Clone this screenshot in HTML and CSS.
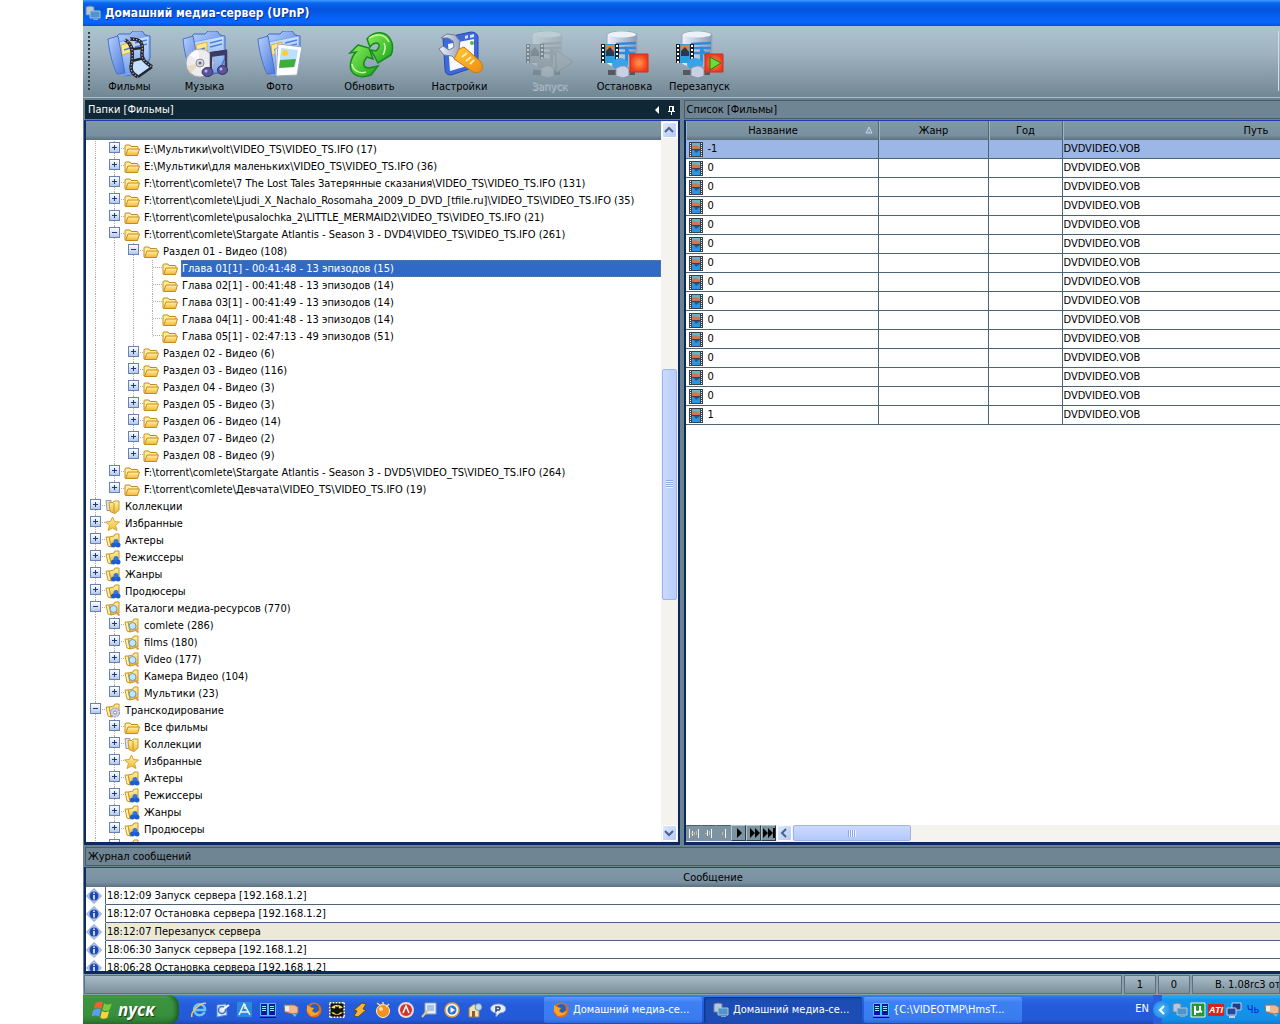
FILE: index.html
```html
<!DOCTYPE html>
<html lang="ru">
<head>
<meta charset="utf-8">
<title>Домашний медиа-сервер (UPnP)</title>
<link rel="stylesheet" href="styles.css">
</head>
<body>
<svg class="sprite" aria-hidden="true">
  <defs>
    <linearGradient id="gBlue" x1="0" y1="0" x2="1" y2="1"><stop offset="0" stop-color="#b5d0fb"/><stop offset="1" stop-color="#4a78dc"/></linearGradient>
    <linearGradient id="gPale" x1="0" y1="0" x2="0" y2="1"><stop offset="0" stop-color="#cfe4ff"/><stop offset="1" stop-color="#6f9cea"/></linearGradient>
    <linearGradient id="gGreen" x1="0" y1="0" x2="1" y2="1"><stop offset="0" stop-color="#8cf05a"/><stop offset="1" stop-color="#18a01c"/></linearGradient>
    <linearGradient id="gGold" x1="0" y1="0" x2="0" y2="1"><stop offset="0" stop-color="#fff3a8"/><stop offset="1" stop-color="#f2b632"/></linearGradient>
    <linearGradient id="gOrange" x1="0" y1="0" x2="1" y2="1"><stop offset="0" stop-color="#ffcc3c"/><stop offset="1" stop-color="#f08a10"/></linearGradient>
    <linearGradient id="gSteel" x1="0" y1="0" x2="1" y2="0"><stop offset="0" stop-color="#eef2fa"/><stop offset="1" stop-color="#8b99b8"/></linearGradient>
    <radialGradient id="gRed"><stop offset="0" stop-color="#ff9a4a"/><stop offset="1" stop-color="#f0381c"/></radialGradient>

    <symbol id="bigfolder" viewBox="0 0 48 48">
      <path d="M10 6l3-3h11l3-3h9l3 4 5 1v22l-6 15-20 3z" fill="url(#gBlue)" stroke="#3f68c4"/>
      <path d="M12 11l31-6v22l-6 13-21 5z" fill="url(#gPale)" stroke="#7ea4ea"/>
      <path d="M15 14l11-3v10l-10 3z" fill="#ffe88a" stroke="#e0b040"/>
      <path d="M29 12l12-3M29 16l12-3M18 19l6-2" stroke="#4f80dc" stroke-width="1.5"/>
      <path d="M2 8l10-3 7 37-8 1C6 32 3 20 2 8z" fill="url(#gBlue)" stroke="#4a72cc"/>
    </symbol>
    <symbol id="films" viewBox="0 0 48 48">
      <use href="#bigfolder"/>
      <path d="M27 30l11-3 8 9-12 9-7-5z" fill="#c4e2ff"/>
      <path d="M19 9c9 4 8 16 6 27 0 5 3 8 7 10M24 8c9 0 14 2 12 14-1 6 3 9 10 14" fill="none" stroke="#26262e" stroke-width="3.5"/>
      <path d="M27 18l9-1M26 30l12-3M32 46l14-10" fill="none" stroke="#26262e" stroke-width="2.5"/>
      <path d="M19 9c9 4 8 16 6 27 0 5 3 8 7 10M24 8c9 0 14 2 12 14-1 6 3 9 10 14" fill="none" stroke="#cfdcf0" stroke-width="1.2" stroke-dasharray="1 2"/>
    </symbol>
    <symbol id="music" viewBox="0 0 48 48">
      <use href="#bigfolder"/>
      <circle cx="19" cy="32" r="14" fill="#ececee" stroke="#a6a6b2"/>
      <path d="M19 32L9 24a13 13 0 0 1 8-5zM19 32l9 9a13 13 0 0 1-7 4z" fill="#fff"/>
      <path d="M19 32L6 35a13 13 0 0 0 4 7z" fill="#e8dcc0"/>
      <circle cx="19" cy="32" r="4" fill="#d8d8e0" stroke="#8a8a98"/><circle cx="19" cy="32" r="1.500" fill="#667"/>
      <path d="M30 39V22l15-2v18" fill="none" stroke="#3c3a66" stroke-width="2.500"/>
      <path d="M30 21l15-2v5l-15 2z" fill="#3c3a66"/>
      <ellipse cx="26.500" cy="41" rx="5.500" ry="4.500" fill="#5a549c" stroke="#34305e"/><ellipse cx="41.500" cy="39" rx="5" ry="4.500" fill="#5a549c" stroke="#34305e"/>
      <circle cx="25" cy="40" r="1.500" fill="#b8b4ec"/><circle cx="40" cy="38" r="1.500" fill="#b8b4ec"/>
    </symbol>
    <symbol id="photo" viewBox="0 0 48 48">
      <use href="#bigfolder"/>
      <path d="M19 18l5-3v28l-4-1z" fill="#eef4ff" stroke="#8aa0cc"/>
      <path d="M22 13l24 3-5 28-21 1z" fill="#fff" stroke="#9aa8c4"/>
      <path d="M25 17l17 2-3 17-16 1z" fill="#b9e0ff"/>
      <path d="M24 29l16-1-2 8-15 1z" fill="#3fae38"/><circle cx="29" cy="22" r="3" fill="#ffd02c"/>
    </symbol>
    <symbol id="refresh" viewBox="0 0 48 48">
      <path d="M12 14l11 3 4 11-6-2c-5 6-4 11 2 11l9-2-7 9c-14 5-23-2-20-14 1-4 3-7 5-9l-6 1z" fill="url(#gGreen)" stroke="#178a1c" stroke-width="1.500"/>
      <path d="M21 8C28-1 42-1 46 12c1 5 1 8-1 12l-13 8-7-13 5 1c4-4 4-7 1-8-3 0-5 1-7 4z" fill="url(#gGreen)" stroke="#178a1c" stroke-width="1.500"/>
      <path d="M23 7c7-5 16-4 20 4M6 33c1 7 8 10 14 8M38 12c2 4 1 8-1 12" fill="none" stroke="#c4ffa0" stroke-width="1.500"/>
    </symbol>
    <symbol id="settings" viewBox="0 0 48 48">
      <path d="M7 7l28-6q6 0 7 5v29L15 44q-6 0-6-6z" fill="#3e68dc" stroke="#2848b4"/>
      <path d="M12 13l26-5v25l-24 7z" fill="#f7f9ff"/>
      <path d="M29 5l3-1v3l-3 1zM34 4l4-1v3l-4 1z" fill="#d5e4ff"/><circle cx="36" cy="12" r="2" fill="#58b848"/>
      <path d="M5 7l6-4 8 1 5 6-1 8 5 7-6 6-6-6-8-1-5-6 4-3 6 4 5-3-1-6-5-3z" fill="url(#gSteel)" stroke="#737e94"/>
      <path d="M23 18l5-2 17 15c4 8-1 12-8 10L18 28z" fill="url(#gOrange)" stroke="#c87814"/>
      <path d="M26 26l5-4M30 30l5-4M34 33l4-4" stroke="#fff0a8" stroke-width="2"/>
    </symbol>
    <symbol id="server" viewBox="0 0 48 48">
      <path d="M6 3c8-4 22-4 30 0v30c-8 5-22 5-30 0z" fill="url(#gSteel)" stroke="#99a6bc"/>
      <ellipse cx="21" cy="3.500" rx="14" ry="3" fill="#edf2fa"/>
      <path d="M15 13l20-1M15 17h20M17 22h17" stroke="#2f8bd8" stroke-width="2.500"/>
      <path d="M0 13h18v19H0z" fill="#2aa0dc"/><path d="M5 14h8v6H5z" fill="#f07a40"/><path d="M5 20l4-4 4 5v4H5z" fill="#2a3850"/>
      <path d="M2 13v19M16 13v19" stroke="#1c1e24" stroke-width="4"/><path d="M2 14v18M16 14v18" stroke="#fff" stroke-width="2" stroke-dasharray="2 2"/>
      <path d="M24 34V15c3 2 5 5 8 12l-3-1-2-5v12z" fill="#2a8edc"/><ellipse cx="19" cy="33" rx="8" ry="6" fill="#3aa2ec"/>
      <path d="M7 39h27v5H7z" fill="#55585e"/><path d="M15 37l5-2h4l4 3v7l-6 2-7-2z" fill="#c8d0e4" stroke="#8792ac"/>
    </symbol>
    <symbol id="start" viewBox="0 0 48 48"><use href="#server"/><path d="M30 19l17 12-17 11z" fill="#9dabb5" stroke="#667781"/></symbol>
    <symbol id="stop" viewBox="0 0 48 48"><use href="#server"/><path d="M29 23h18v18H29z" fill="url(#gRed)" stroke="#d03018"/></symbol>
    <symbol id="restart" viewBox="0 0 48 48"><use href="#server"/><path d="M29 23h18v18H29z" fill="url(#gRed)" stroke="#d03018"/><path d="M34 26l11 6-11 7z" fill="#6cdc30" stroke="#21791a"/></symbol>

    <symbol id="folder" viewBox="0 0 16 16">
      <path d="M1 13V4q0-1 1-1h4l1 1.500h6q1 0 1 1V7" fill="#fff0a0" stroke="#c8881c"/>
      <path d="M4 7h11.500l-2 6.500H1.500z" fill="url(#gGold)" stroke="#c8881c"/>
    </symbol>
    <symbol id="books" viewBox="0 0 16 16">
      <path d="M1 1.500h5v10H2z" fill="#e4e4e4" stroke="#999"/><path d="M4 3.500h4l1-1.500h5v9l-4 3.500-5-2z" fill="url(#gGold)" stroke="#c29a30"/><path d="M9 4v9" stroke="#c29a30"/>
    </symbol>
    <symbol id="star" viewBox="0 0 16 16"><path d="M7.500 1l2 4.500 5 .5-4 3.500 1.500 5-4.500-2.500L3 14.500l1.500-5L.5 6l5-.5z" fill="url(#gGold)" stroke="#d6a428"/></symbol>
    <symbol id="yfold" viewBox="0 0 16 16"><path d="M4 4l5-1 1-2h4v11l-8 2z" fill="url(#gGold)" stroke="#c8981c"/><path d="M1 4h3l2 10-3-1z" fill="#fff2b4" stroke="#c8981c"/></symbol>
    <symbol id="people" viewBox="0 0 16 16"><use href="#yfold"/><circle cx="11" cy="8.500" r="2.500" fill="#2f78e4"/><circle cx="8.500" cy="12" r="2.500" fill="#1c5cd0"/><circle cx="13" cy="12" r="2.500" fill="#1c5cd0"/></symbol>
    <symbol id="search" viewBox="0 0 16 16"><use href="#yfold"/><path d="M11 11l3.500 3.500" stroke="#e0965c" stroke-width="2"/><circle cx="8.500" cy="8" r="3.500" fill="#bfe6ff" stroke="#6f98b8"/></symbol>
    <symbol id="gear" viewBox="0 0 16 16"><use href="#yfold"/><circle cx="10" cy="9.500" r="4.500" fill="#cfd0e6" stroke="#8a8cb0" stroke-dasharray="2 1"/><circle cx="10" cy="9.500" r="1.500" fill="#fff" stroke="#8a8cb0"/></symbol>
    <symbol id="clip" viewBox="0 0 14 15">
      <path d="M0 0h14v15H0z" fill="#38404a"/><path d="M3 1h8v6H3z" fill="#68b4c4"/><path d="M3 4l3-1 5 2v2H3z" fill="#d8744c"/><path d="M3 8h8v6H3z" fill="#2e94e4"/><path d="M5 8h6l-4 3z" fill="#28587c"/>
      <path d="M1.500 1v14M12.500 1v14" stroke="#fff" stroke-dasharray="1 1"/>
    </symbol>
    <symbol id="info" viewBox="0 0 16 16"><path d="M8 .5L15.500 8 8 15.500.5 8z" fill="#b4c6ee" stroke="#8ca0d0"/><circle cx="8" cy="8" r="4.500" fill="#1c48b0"/><path d="M8 4.500v1.500M8 7v4.500" stroke="#fff" stroke-width="1.5"/></symbol>
    <symbol id="app" viewBox="0 0 16 16"><path d="M1 2q4-2 8 0v8H1z" fill="#b6c8da" stroke="#6c849c"/><path d="M5 6h10v7H5z" fill="#4f94cc" stroke="#a8c4d8"/><path d="M8 14.500h5" stroke="#8ca4b8"/></symbol>
    <symbol id="flag" viewBox="0 0 20 20"><path d="M3 4q4-3 7-1L8.500 9q-3-2-7 0z" fill="#f0602c"/><path d="M11 4q3 2 7 0l-2 6q-4 2-6.500 0z" fill="#7cc83c"/><path d="M1 10.500q4-3 7-1L6.500 16q-3-2-7 0z" fill="#5c9cf4"/><path d="M9 11q3 2 6.500 0L14 17q-4 2-6.500 0z" fill="#fcd03c"/></symbol>
    <symbol id="ie" viewBox="0 0 16 16"><path d="M13.500 10a5.500 5.500 0 1 1 .5-2H4.500" fill="none" stroke="#6cc4fc" stroke-width="2.500"/><path d="M1 15C-1 10 10 0 15 1.500" fill="none" stroke="#f4cc48" stroke-width="1.500"/></symbol>
    <symbol id="outlook" viewBox="0 0 16 16"><path d="M3 3l9-1 1 11-10 2z" fill="#dceafc" stroke="#5c8cc8"/><circle cx="8" cy="8" r="3.500" fill="none" stroke="#3c78c4" stroke-width="1.500"/><path d="M8 8l7-5" stroke="#fff" stroke-width="2"/></symbol>
    <symbol id="compass" viewBox="0 0 16 16"><path d="M0 0h15v15H0z" fill="#2c88d8"/><path d="M2 13L7 2l6 11M4 10h8M8 2v5" fill="none" stroke="#e8f6ff" stroke-width="1.500"/></symbol>
    <symbol id="far" viewBox="0 0 16 16"><path d="M.5 1.500h15v12H.500z" fill="#0c149c" stroke="#24d4f4"/><path d="M8 1v13" stroke="#24d4f4" stroke-width="2"/><path d="M2 4.500h4M2 6.500h4M2 8.500h4M10 4.500h4M10 6.500h4M10 8.500h4" stroke="#9ce8fc"/><path d="M0 15.500h16" stroke="#061040"/></symbol>
    <symbol id="plug" viewBox="0 0 16 16"><path d="M1 3h10l4 2v6l-5 1-8-2z" fill="#f0b890" stroke="#a87050"/><path d="M2 4h4v5H2z" fill="#e8ecf4"/><path d="M9 12h5l-2 3z" fill="#58b8e8"/></symbol>
    <symbol id="fox" viewBox="0 0 16 16"><circle cx="8" cy="8" r="7.500" fill="#e86a14"/><circle cx="8.500" cy="6.500" r="4.500" fill="#2c60b8"/><path d="M1 3l3 2 4 1-2 3 3 2 5-2-3 4-6 1-4-5z" fill="#fca428"/></symbol>
    <symbol id="bat" viewBox="0 0 16 16"><path d="M0 0h16v16H0z" fill="#111"/><path d="M.5.5h15v15H.500z" fill="none" stroke="#fff" stroke-width="2" stroke-dasharray="2 1"/><ellipse cx="8" cy="8" rx="6.500" ry="5" fill="#f4e850"/><path d="M2 5.500q2 1 4 1L6.500 4l1.500 1 1.500-1 .5 2.500q2 0 4-1v5q-3-1-4 1l-2 1-2-1q-1-2-4-1z" fill="#111"/></symbol>
    <symbol id="winamp" viewBox="0 0 16 16"><path d="M10 1l4 1-3 5 3 1-8 7-4-1 3-5-3-1z" fill="#f8b434" stroke="#684818"/></symbol>
    <symbol id="orb" viewBox="0 0 16 16"><circle cx="8" cy="9" r="6.500" fill="#f49020" stroke="#fff0d0"/><path d="M2 1l4 3M8 0v3M14 2l-3 3" stroke="#fcdc7c" stroke-width="1.500"/><circle cx="6" cy="7" r="2" fill="#ffe0a8"/></symbol>
    <symbol id="nero" viewBox="0 0 16 16"><circle cx="8" cy="8" r="7" fill="#d4342c" stroke="#eed8d8" stroke-width="2"/><path d="M5 11l3-7 3 7" fill="none" stroke="#fff" stroke-width="1.500"/></symbol>
    <symbol id="note" viewBox="0 0 16 16"><path d="M4 1h11v11H4z" fill="#e4eef8" stroke="#8ca0c0"/><path d="M6 4h7M6 6h7M6 8h7" stroke="#6c98d4"/><path d="M1 15l6-7" stroke="#e0c48c" stroke-width="2"/></symbol>
    <symbol id="wmp" viewBox="0 0 16 16"><circle cx="8" cy="8" r="7" fill="#f4f6fa" stroke="#e09c38" stroke-width="1.500"/><circle cx="8" cy="8" r="4.500" fill="#2c70d0"/><path d="M6.500 5l4.500 3-4.500 3z" fill="#fff"/></symbol>
    <symbol id="house" viewBox="0 0 16 16"><path d="M2 15V6l5-4 5 4v9z" fill="#f4e4b0" stroke="#98805c"/><path d="M5 9h3v6H5z" fill="#905c30"/><circle cx="11.500" cy="5" r="3.500" fill="#b8dcf8" stroke="#6888a8"/></symbol>
    <symbol id="bubble" viewBox="0 0 16 16"><path d="M8 2c10 0 10 9 2 9l-4 4v-4C-2 10-1 2 8 2z" fill="#e4ecf8" stroke="#8098c0"/><path d="M6 10V5h3q2 1 0 3H6" fill="none" stroke="#304878" stroke-width="1.500"/></symbol>
    <symbol id="mu" viewBox="0 0 16 16"><path d="M1 1h14v14H1z" fill="#2c9438" stroke="#e8f8e8"/><path d="M5 13V4M5 9q3 2 5 0V4M10 9l2 1" fill="none" stroke="#fff" stroke-width="2"/></symbol>
    <symbol id="net" viewBox="0 0 16 16"><path d="M6 1h9v7H6z" fill="#1c3c8c" stroke="#c4d0e4"/><path d="M1 6h9v7H1z" fill="#24489c" stroke="#c4d0e4"/><path d="M3 15h6" stroke="#c4d0e4" stroke-width="2"/></symbol>
  </defs>
</svg>

<div class="desktop">
  <header class="titlebar"><svg class="ic"><use href="#app"/></svg><h1>Домашний медиа-сервер (UPnP)</h1></header>

  <nav class="toolbar" aria-label="Панель инструментов">
    <div class="group">
      <button class="tool"><svg><use href="#films"/></svg>Фильмы</button>
      <button class="tool"><svg><use href="#music"/></svg>Музыка</button>
      <button class="tool"><svg><use href="#photo"/></svg>Фото</button>
    </div>
    <button class="tool"><svg><use href="#refresh"/></svg>Обновить</button>
    <button class="tool"><svg><use href="#settings"/></svg>Настройки</button>
    <div class="group">
      <button class="tool" disabled><svg><use href="#start"/></svg>Запуск</button>
      <button class="tool"><svg><use href="#stop"/></svg>Остановка</button>
      <button class="tool"><svg><use href="#restart"/></svg>Перезапуск</button>
    </div>
  </nav>

  <main class="panes">
    <section class="pane pane-tree">
      <h2 class="caption caption-active"><span>Папки [Фильмы]</span>
        <svg class="pins" viewBox="0 0 22 10"><path d="M5 1v8L1 5z" fill="#fff"/><path d="M15.500 1v5M18.500 1v5M19.500 1v5M15 1.500h5M14 6.500h7M17.500 7v3" stroke="#fff"/></svg>
      </h2>
      <div class="frame tree-frame">
        <div class="tree-body">
          <div class="colhead"></div>
          <ul class="tree" id="tree"></ul>
        </div>
        <div class="vscroll">
          <button class="sb" aria-label="Вверх"><svg viewBox="0 0 10 10"><path d="M1 7l4-4 4 4"/></svg></button>
          <div class="track"><div class="thumb"></div></div>
          <button class="sb" aria-label="Вниз"><svg viewBox="0 0 10 10"><path d="M1 3l4 4 4-4"/></svg></button>
        </div>
      </div>
    </section>

    <section class="pane pane-list">
      <h2 class="caption"><span>Список [Фильмы]</span></h2>
      <div class="frame list-frame">
        <div class="list-body">
          <table class="list">
            <colgroup><col class="c-name"><col class="c-genre"><col class="c-year"><col class="c-path"></colgroup>
            <thead><tr><th>Название<svg class="sort" viewBox="0 0 8 8"><path d="M4 1L1 7h6z"/></svg></th><th>Жанр</th><th>Год</th><th>Путь</th></tr></thead>
            <tbody id="files"></tbody>
          </table>
        </div>
        <div class="navigator">
          <button class="nav" disabled aria-label="Первая"><svg viewBox="0 0 14 12"><path d="M2.500 2v9M11.500 2v9M5.500 4v5"/><path class="dim" d="M7.500 5v3M4 6.500h2M9.500 4v4"/></svg></button>
          <button class="nav" disabled aria-label="Предыдущая страница"><svg viewBox="0 0 14 12"><path d="M5.500 3v6M9.500 2v9"/><path class="dim" d="M7.500 4v4M3 6.500h2"/></svg></button>
          <button class="nav" disabled aria-label="Предыдущая"><svg viewBox="0 0 14 12"><path d="M8.500 2v9"/><path class="dim" d="M5.500 5v3"/></svg></button>
          <button class="nav" aria-label="Следующая"><svg viewBox="0 0 14 12"><path class="on" d="M5 1v10l5-5z"/></svg></button>
          <button class="nav" aria-label="Следующая страница"><svg viewBox="0 0 14 12"><path class="on" d="M3 1v10l5-5zM8 1v10l5-5z"/></svg></button>
          <button class="nav" aria-label="Последняя"><svg viewBox="0 0 14 12"><path class="on" d="M1 1v10l5-5zM6 1v10l5-5zM11 1h2v10h-2z"/></svg></button>
          <button class="sb" aria-label="Влево"><svg viewBox="0 0 10 10"><path d="M7 1L3 5l4 4"/></svg></button>
          <div class="hthumb"></div>
        </div>
      </div>
    </section>
  </main>

  <section class="log">
    <h2 class="caption"><span>Журнал сообщений</span></h2>
    <div class="frame log-frame">
      <table class="messages">
        <colgroup><col class="c-icon"><col></colgroup>
        <thead><tr><th colspan="2">Сообщение</th></tr></thead>
        <tbody id="messages"></tbody>
      </table>
    </div>
  </section>

  <footer class="status"><span class="cell wide"></span><span class="cell num">1</span><span class="cell num">0</span><span class="cell ver">В. 1.08rc3 от</span></footer>

  <nav class="taskbar" aria-label="Панель задач">
    <button class="startbtn"><svg><use href="#flag"/></svg>пуск</button>
    <div class="quick" id="quick"></div>
    <div class="tasks">
      <button class="task"><svg class="ic"><use href="#fox"/></svg>Домашний медиа-се...</button>
      <button class="task pressed"><svg class="ic"><use href="#app"/></svg>Домашний медиа-се...</button>
      <button class="task"><svg class="ic"><use href="#far"/></svg>{C:\VIDEOTMP\HmsT...</button>
    </div>
    <span class="lang">EN</span>
    <div class="tray">
      <button class="chev" aria-label="Показать значки"><svg viewBox="0 0 10 10"><path d="M7 1L3 5l4 4"/></svg></button>
      <svg class="ic"><use href="#app"/></svg>
      <svg class="ic"><use href="#mu"/></svg>
      <span class="ati">ATI</span>
      <svg class="ic"><use href="#net"/></svg>
      <span class="count">Чь</span>
      <svg class="ic"><use href="#plug"/></svg>
    </div>
  </nav>
</div>
<script src="app.js"></script>
</body>
</html>
```

FILE: styles.css
```css
* { box-sizing: border-box; }
body {
  margin: 0;
  background: #fff;
  font: 11px/16px "DejaVu Sans Condensed", "DejaVu Sans", sans-serif;
  color: #000;
}
button { font: inherit; color: inherit; border: 0; padding: 0; background: none; }
h1, h2, ul { margin: 0; padding: 0; font-size: inherit; font-weight: normal; }
.sprite { position: absolute; width: 0; height: 0; }
.ic { width: 16px; height: 16px; flex: none; }

.desktop {
  display: flex;
  flex-direction: column;
  height: 100vh;
  margin-left: 83px;
  overflow: hidden;
  background: #6c828f;
}

.titlebar {
  display: flex;
  align-items: center;
  gap: 4px;
  height: 26px;
  padding-left: 2px;
  flex: none;
  background: linear-gradient(#3f9bff 0, #0a66f0 3px, #0453dd 9px, #0560f4 17px, #0668ff 22px, #0452d8 26px);
}
.titlebar h1 { color: #fff; font-size: 12px; font-weight: bold; text-shadow: 1px 1px 0 #0a2f8c; }

.toolbar {
  display: flex;
  gap: 15px;
  height: 72px;
  flex: none;
  padding: 5px 0 0 9px;
  border-bottom: 1px solid #a9c0cc;
  background: linear-gradient(#adc4d0, #9db2be 40%, #728794);
}
.toolbar::before {
  content: "";
  width: 2px;
  height: 60px;
  margin: 1px -13px 0 -4px;
  background: repeating-linear-gradient(#2d3f4a 0 2px, transparent 2px 4px);
}
.toolbar::after {
  content: "";
  width: 1px;
  height: 60px;
  margin: 0 1px 0 auto;
  background: #d0dee6;
}
.group { display: flex; }
.tool { display: flex; flex-direction: column; align-items: center; width: 75px; line-height: 16px; }
.tool svg { width: 48px; height: 48px; }
.tool:disabled { color: #93a4ae; text-shadow: 1px 1px 0 #b4c2ca; }
.tool:disabled svg { filter: grayscale(1); opacity: .3; }

.panes { display: flex; gap: 4px; flex: 1; min-height: 0; padding-top: 2px; }
.pane { display: flex; flex-direction: column; min-width: 0; }
.pane-tree { flex: 0 0 calc(50% - 2px); }
.pane-list { flex: 1; }
.caption {
  display: flex;
  align-items: center;
  justify-content: space-between;
  height: 19px;
  flex: none;
  margin: 0 0 1px 2px;
  padding: 0 4px 0 2px;
  border: 1px solid #475c68;
  border-right: 0;
  background: #6f8593;
}
.pane-list .caption { margin-left: 0; }
.caption-active { background: #102835; border-color: #102835; color: #fff; }
.pins { width: 22px; height: 10px; }
.frame {
  border: 2px solid #0c2a60;
  border-top: 1px solid #1c3cac;
  background: #fff;
}
.colhead, th { height: 19px; background: linear-gradient(#8098a8, #7890a0 75%, #5c7280); }

.tree-frame { display: flex; flex: 1; min-height: 0; border-bottom-width: 3px; margin-left: 1px; }
.tree-body { flex: 1; min-width: 0; overflow: hidden; }
.tree { list-style: none; padding-top: 1px; }
.row { display: flex; height: 17px; line-height: 17px; white-space: pre; }
.row .ic { margin-top: 1px; }
.guide { position: relative; width: 19px; flex: none; }
.guide.line {
  background: repeating-linear-gradient(#b8a8a8 0 1px, transparent 1px 2px) 9px 0 / 1px 100% no-repeat;
}
.guide.last { background-size: 1px 50%; }
.guide.joint::after {
  content: "";
  position: absolute;
  left: 10px;
  right: 0;
  top: 7px;
  height: 1px;
  background: repeating-linear-gradient(90deg, #b8a8a8 0 1px, transparent 1px 2px);
}
.expander {
  position: relative;
  z-index: 1;
  display: block;
  width: 11px;
  height: 11px;
  margin: 1px 0 0 4px;
  border: 1px solid #6882b4;
  background:
    linear-gradient(#203c74, #203c74) 2px 4px / 5px 1px no-repeat,
    linear-gradient(#fff, #b4c8ec);
}
.expander.closed {
  background:
    linear-gradient(#203c74, #203c74) 2px 4px / 5px 1px no-repeat,
    linear-gradient(#203c74, #203c74) 4px 2px / 1px 5px no-repeat,
    linear-gradient(#fff, #b4c8ec);
}
.label { margin-left: 3px; padding-left: 1px; }
.selected .label { flex: 1; background: #316ac5; color: #fff; outline: 1px dotted #6a7a9c; outline-offset: -1px; }

.vscroll { display: flex; flex-direction: column; width: 17px; flex: none; background: #f4f3ee; }
.sb {
  display: grid;
  place-items: center;
  width: 15px;
  height: 16px;
  flex: none;
  margin: 1px;
  border: 1px solid #fff;
  border-radius: 2px;
  background: linear-gradient(135deg, #dce8ff, #b4c8f6);
}
.sb svg, .chev svg { width: 10px; height: 10px; fill: none; stroke: #4d6185; stroke-width: 2; }
.track { display: flex; flex-direction: column; flex: 1; }
.track::before { content: ""; flex: 231; }
.track::after { content: ""; flex: 225; }
.thumb {
  flex: 229;
  margin: 0 1px;
  border: 1px solid #9cb4ec;
  border-radius: 2px;
  background:
    repeating-linear-gradient(#8ca8e8 0 1px, #eef4ff 1px 2px) center / 7px 8px no-repeat,
    linear-gradient(90deg, #cbdafe, #b9cdfa);
}

.list-frame { display: flex; flex-direction: column; flex: 1; min-height: 0; border-width: 1px 0 3px 2px; }
.list-body { flex: 1; min-height: 0; overflow: hidden; }
table { border-collapse: separate; border-spacing: 0; table-layout: fixed; }
th { position: relative; padding: 0; font-weight: normal; line-height: 16px; }
td { padding: 0 0 0 1px; line-height: 16px; white-space: nowrap; }
.list { width: 764px; }
.c-name { width: 193px; }
.c-genre { width: 110px; }
.c-year { width: 74px; }
.list th { border-left: 1px solid #a0b4c0; border-right: 1px solid #506874; }
.list th:first-child { padding-right: 18px; }
.sort { position: absolute; right: 5px; top: 5px; width: 8px; height: 8px; fill: #8ea2ae; stroke: #c6d4dc; }
.list td { height: 19px; border-bottom: 1px solid #4c6478; border-right: 1px solid #4c6478; }
.list .current td { background: #9cb6e6; }
.entry { display: flex; align-items: center; gap: 5px; padding-left: 2px; }
.entry svg { width: 14px; height: 15px; }

.navigator { display: flex; height: 17px; flex: none; background: #f4f3ee; }
.nav { width: 15px; height: 16px; background: #7c94a2; border: 1px solid #4a606c; border-color: #b4c4cc #2c404c #2c404c #b4c4cc; }
.nav:disabled { border-color: #4a606c transparent transparent; }
.nav svg { display: block; width: 14px; height: 12px; fill: none; stroke: #eef2f4; }
.nav .dim { stroke: #c8b89c; }
.nav .on { fill: #000; stroke: none; }
.navigator .sb { margin: 0 1px; }
.hthumb {
  width: 118px;
  height: 16px;
  border: 1px solid #9cb4ec;
  border-radius: 2px;
  background:
    repeating-linear-gradient(90deg, #8ca8e8 0 1px, #eef4ff 1px 2px) center / 8px 7px no-repeat,
    linear-gradient(#cbdafe, #b4c8f8);
}

.log { flex: none; padding-top: 2px; }
.log-frame { height: 107px; margin-left: 1px; border-right: 0; border-bottom-width: 3px; overflow: hidden; }
.messages { width: calc(100% + 60px); }
.c-icon { width: 20px; }
.messages td { height: 18px; border-bottom: 1px solid #4c6478; border-right: 1px solid #4c6478; }
.messages td:first-child { padding: 0; border-bottom-color: #fff; }
.messages .ic { display: block; }
.messages .marked td + td { background: #ece9d8; }

.status { display: flex; gap: 2px; height: 21px; flex: none; padding: 1px 0 1px 1px; background: #8a9fac; }
.cell { border: 1px solid #5c7280; background: linear-gradient(#a8bcc8, #7c909c); line-height: 17px; text-align: center; white-space: nowrap; }
.wide { flex: 1; }
.num { width: 32px; }
.ver { width: 88px; padding-left: 22px; text-align: left; overflow: hidden; }

.taskbar {
  display: flex;
  height: 29px;
  flex: none;
  color: #fff;
  background: linear-gradient(#3c84ec 0, #2c6ae4 3px, #245cdc 10px, #245ad8 24px, #1c48b8);
}
.startbtn {
  display: flex;
  align-items: center;
  gap: 4px;
  width: 96px;
  flex: none;
  padding-left: 9px;
  border-radius: 0 10px 10px 0;
  background: linear-gradient(#64b45c 0, #3c9440 4px, #38903c 20px, #2c7830);
  box-shadow: inset -3px 0 4px #1c5c24;
  font: italic bold 17px/24px "Open Sans", sans-serif;
  text-shadow: 1px 1px 1px #1c3c1c;
}
.startbtn svg { width: 22px; height: 22px; }
.quick { display: flex; align-items: center; gap: 7px; padding-left: 12px; }
.tasks { display: flex; flex: 1; gap: 2px; padding: 2px 0 1px 38px; }
.task {
  display: flex;
  align-items: center;
  gap: 4px;
  width: 158px;
  padding-left: 9px;
  border-radius: 2px;
  background: linear-gradient(#5c9cfc, #3c80f4 5px, #3a7cf0 22px, #2c68dc);
}
.task.pressed { background: #1c4cb4; box-shadow: inset 1px 1px 2px #10307c; }
.lang { line-height: 28px; padding-right: 4px; }
.tray { display: flex; align-items: center; gap: 2px; width: 127px; flex: none; background: linear-gradient(90deg, #2860dc 9px, transparent 9px), linear-gradient(#24b0f8, #1494ec 5px, #1290e8 24px, #1078d0); }
.chev { display: grid; place-items: center; width: 17px; height: 17px; border-radius: 50%; background: radial-gradient(#4cbcfc, #1c7ce0); }
.chev svg { stroke: #fff; }
.ati { width: 16px; background: #d8241c; font: italic bold 9px/12px "Liberation Sans", sans-serif; text-align: center; }
.count { width: 18px; color: #0c20d8; text-align: center; }
```

FILE: app.js
```js
// [level, state, icon, text]; state: "+" closed, "-" open, "" leaf
const nodes = [
  [1, "+", "folder", "E:\\Мультики\\volt\\VIDEO_TS\\VIDEO_TS.IFO (17)"],
  [1, "+", "folder", "E:\\Мультики\\для маленьких\\VIDEO_TS\\VIDEO_TS.IFO (36)"],
  [1, "+", "folder", "F:\\torrent\\comlete\\7 The Lost Tales Затерянные сказания\\VIDEO_TS\\VIDEO_TS.IFO (131)"],
  [1, "+", "folder", "F:\\torrent\\comlete\\Ljudi_X_Nachalo_Rosomaha_2009_D_DVD_[tfile.ru]\\VIDEO_TS\\VIDEO_TS.IFO (35)"],
  [1, "+", "folder", "F:\\torrent\\comlete\\pusalochka_2\\LITTLE_MERMAID2\\VIDEO_TS\\VIDEO_TS.IFO (21)"],
  [1, "-", "folder", "F:\\torrent\\comlete\\Stargate Atlantis - Season 3 - DVD4\\VIDEO_TS\\VIDEO_TS.IFO (261)"],
  [2, "-", "folder", "Раздел 01 - Видео (108)"],
  [3, "", "folder", "Глава 01[1] - 00:41:48 - 13 эпизодов (15)", true],
  [3, "", "folder", "Глава 02[1] - 00:41:48 - 13 эпизодов (14)"],
  [3, "", "folder", "Глава 03[1] - 00:41:49 - 13 эпизодов (14)"],
  [3, "", "folder", "Глава 04[1] - 00:41:48 - 13 эпизодов (14)"],
  [3, "", "folder", "Глава 05[1] - 02:47:13 - 49 эпизодов (51)"],
  [2, "+", "folder", "Раздел 02 - Видео (6)"],
  [2, "+", "folder", "Раздел 03 - Видео (116)"],
  [2, "+", "folder", "Раздел 04 - Видео (3)"],
  [2, "+", "folder", "Раздел 05 - Видео (3)"],
  [2, "+", "folder", "Раздел 06 - Видео (14)"],
  [2, "+", "folder", "Раздел 07 - Видео (2)"],
  [2, "+", "folder", "Раздел 08 - Видео (9)"],
  [1, "+", "folder", "F:\\torrent\\comlete\\Stargate Atlantis - Season 3 - DVD5\\VIDEO_TS\\VIDEO_TS.IFO (264)"],
  [1, "+", "folder", "F:\\torrent\\comlete\\Девчата\\VIDEO_TS\\VIDEO_TS.IFO (19)"],
  [0, "+", "books", "Коллекции"],
  [0, "+", "star", "Избранные"],
  [0, "+", "people", "Актеры"],
  [0, "+", "people", "Режиссеры"],
  [0, "+", "people", "Жанры"],
  [0, "+", "people", "Продюсеры"],
  [0, "-", "search", "Каталоги медиа-ресурсов (770)"],
  [1, "+", "search", "comlete (286)"],
  [1, "+", "search", "films (180)"],
  [1, "+", "search", "Video (177)"],
  [1, "+", "search", "Камера Видео (104)"],
  [1, "+", "search", "Мультики (23)"],
  [0, "-", "gear", "Транскодирование"],
  [1, "+", "folder", "Все фильмы"],
  [1, "+", "books", "Коллекции"],
  [1, "+", "star", "Избранные"],
  [1, "+", "people", "Актеры"],
  [1, "+", "people", "Режиссеры"],
  [1, "+", "people", "Жанры"],
  [1, "+", "people", "Продюсеры"],
  [1, "+", "search", ""]
];

// A guide line goes on below row i if a later sibling exists at that level.
function continues(i, level) {
  if (level === 0) return true;
  for (let k = i + 1; k < nodes.length; k++) {
    if (nodes[k][0] < level) return false;
    if (nodes[k][0] === level) return true;
  }
  return level === 1;
}

const icon = (name, cls = "ic") => `<svg class="${cls}"><use href="#${name}"/></svg>`;

document.getElementById("tree").innerHTML = nodes.map(([level, state, ic, text, sel], i) => {
  let cells = "";
  for (let l = 0; l < level; l++) cells += `<span class="guide ${continues(i, l) ? "line" : ""}"></span>`;
  const button = state ? `<button class="expander ${state === "+" ? "closed" : ""}" aria-label="${state === "+" ? "Развернуть" : "Свернуть"}"></button>` : "";
  cells += `<span class="guide line joint ${continues(i, level) ? "" : "last"}">${button}</span>`;
  return `<li class="row ${sel ? "selected" : ""}">${cells}${icon(ic)}<span class="label">${text}</span></li>`;
}).join("");

const names = ["-1", ...Array(13).fill("0"), "1"];
document.getElementById("files").innerHTML = names.map((n, i) =>
  `<tr class="${i ? "" : "current"}"><td><div class="entry">${icon("clip", "")}${n}</div></td><td></td><td></td><td>DVDVIDEO.VOB</td></tr>`
).join("");

const log = [
  "18:12:09 Запуск сервера [192.168.1.2]",
  "18:12:07 Остановка сервера [192.168.1.2]",
  "18:12:07 Перезапуск сервера",
  "18:06:30 Запуск сервера [192.168.1.2]",
  "18:06:28 Остановка сервера [192.168.1.2]"
];
document.getElementById("messages").innerHTML = log.map((m, i) =>
  `<tr class="${i === 2 ? "marked" : ""}"><td>${icon("info")}</td><td>${m}</td></tr>`
).join("");

document.getElementById("quick").innerHTML =
  ["ie", "outlook", "compass", "far", "plug", "fox", "bat", "winamp", "orb", "nero", "note", "wmp", "house", "bubble"]
    .map(n => icon(n)).join("");
```
